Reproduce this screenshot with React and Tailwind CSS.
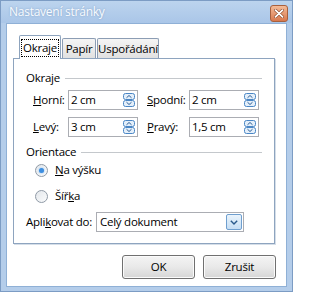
import React from "react";

const Spinner = () => (
  <svg width="12" height="14" viewBox="0 0 12 14" className="shrink-0">
    <rect x="0.5" y="0.5" width="11" height="6" rx="2" fill="#e4effa" stroke="#4a86c5" />
    <rect x="0.5" y="7.5" width="11" height="6" rx="2" fill="#e4effa" stroke="#4a86c5" />
    <path d="M3.5 4.8 L6 2.5 L8.5 4.8" fill="none" stroke="#2d5f97" />
    <path d="M3.5 9.2 L6 11.5 L8.5 9.2" fill="none" stroke="#2d5f97" />
  </svg>
);

const GroupTitle = ({ children }) => (
  <div className="flex items-center h-[16px] pr-[12px]">
    <span className="pr-[5px]">{children}</span>
    <div className="flex-1 h-px bg-[#c4c8cc]" />
  </div>
);

const SpinField = ({ mnemonic, rest, value, labelWidth }) => (
  <div className="flex items-center">
    <span className={labelWidth}>
      <u>{mnemonic}</u>
      {rest}
    </span>
    <div className="w-[70px] h-[20px] border border-[#abadb3] bg-white flex items-center pl-[2px] pr-[2px]">
      <span className="flex-1">{value}</span>
      <Spinner />
    </div>
  </div>
);

const Radio = ({ checked, children }) => (
  <div className="flex items-center h-[18px] pl-[21px]">
    <div className="w-[13px] h-[13px] rounded-full border border-[#8f9aa6] bg-gradient-to-br from-[#e3e7eb] to-[#fafbfc] flex items-center justify-center">
      {checked && <div className="w-[5px] h-[5px] rounded-full bg-[#3d8ee0] shadow-[0_0_2px_#7ab6f0]" />}
    </div>
    <span className="pl-[7px]">{children}</span>
  </div>
);

const Button = ({ children }) => (
  <button className="w-[73px] h-[24px] rounded-[3px] border border-[#707070] bg-gradient-to-b from-[#f4f4f4] via-[#e9e9e9] to-[#d6d6d6] shadow-[inset_0_0_0_1px_#fbfbfb] text-black">
    {children}
  </button>
);

export default function App() {
  return (
    <div className="w-[293px] h-[292px] bg-[#b4cdea] border border-[#7c9cc4] flex flex-col font-['Open_Sans','Noto_Sans',sans-serif] text-[11.5px] tracking-[-0.25px] leading-none text-black whitespace-nowrap">
      {/* title bar */}
      <div className="h-[22px] flex items-center justify-between pl-[8px] pr-[4px] bg-gradient-to-b from-[#bcd4ee] to-[#aac6e8]">
        <span className="text-[#f8fbff] text-[12px] [text-shadow:0_0_2px_#7d9cc2]">Nastavení stránky</span>
        <div className="w-[18px] h-[17px] mt-[3px] rounded-[3px] border border-[#a8603d] bg-gradient-to-b from-[#f3bb98] to-[#d8784d] flex items-center justify-center">
          <svg width="10" height="9" viewBox="0 0 10 9">
            <path d="M1.5 1.2 L8.5 7.8 M8.5 1.2 L1.5 7.8" stroke="#8c4a2c" strokeWidth="3" strokeLinecap="round" />
            <path d="M1.5 1.2 L8.5 7.8 M8.5 1.2 L1.5 7.8" stroke="#ffffff" strokeWidth="1.8" strokeLinecap="round" />
          </svg>
        </div>
      </div>

      {/* client area */}
      <div className="mx-[5px] h-[264px] bg-white border border-[#8fb0d6] pt-[11px] pl-[6px] flex flex-col">
        {/* tabs */}
        <div className="flex items-end pl-[6px] -mb-px relative z-10 h-[24px]">
          <div className="w-[42px] h-[24px] bg-white border border-b-0 border-[#8da3bd] rounded-t-[2px] flex items-center justify-center">
            <span className="border border-dotted border-black px-[1px] h-[18px] flex items-center">Okraje</span>
          </div>
          <div className="ml-px mb-px w-[34px] h-[20px] border border-b-0 border-[#8c9db4] rounded-t-[2px] bg-gradient-to-b from-[#f5f5f5] to-[#e1e1e1] flex items-center justify-center">
            Papír
          </div>
          <div className="ml-px mb-px w-[62px] h-[20px] border border-b-0 border-[#8c9db4] rounded-t-[2px] bg-gradient-to-b from-[#f5f5f5] to-[#e1e1e1] flex items-center justify-center">
            Uspořádání
          </div>
        </div>

        {/* panel */}
        <div className="w-[262px] h-[186px] border border-[#8ea4bf] bg-white shadow-[1px_1px_0_#d5dee8] pl-[12px] pt-[11px] flex flex-col">
          <GroupTitle>Okraje</GroupTitle>
          <div className="flex mt-[4px] pl-[7px]">
            <SpinField mnemonic="H" rest="orní:" value="2 cm" labelWidth="w-[35px]" />
            <div className="ml-[9px]">
              <SpinField mnemonic="S" rest="podní:" value="2 cm" labelWidth="w-[42px]" />
            </div>
          </div>
          <div className="flex mt-[7px] pl-[7px]">
            <SpinField mnemonic="L" rest="evý:" value="3 cm" labelWidth="w-[35px]" />
            <div className="ml-[9px]">
              <SpinField mnemonic="P" rest="ravý:" value="1,5 cm" labelWidth="w-[42px]" />
            </div>
          </div>
          <div className="mt-[7px]">
            <GroupTitle>Orientace</GroupTitle>
          </div>
          <div className="mt-px -ml-[12px]">
            <Radio checked>
              <u>N</u>a výšku
            </Radio>
          </div>
          <div className="mt-[8px] -ml-[12px]">
            <Radio>
              Šíř<u>k</u>a
            </Radio>
          </div>
          <div className="flex items-center mt-[7px]">
            <span className="w-[70px]">
              Apli<u>k</u>ovat do:
            </span>
            <div className="w-[148px] h-[20px] border border-[#abadb3] flex items-center pl-[3px] pr-px">
              <span className="flex-1">Celý dokument</span>
              <div className="w-[16px] h-[16px] rounded-[2px] border border-[#6f9fcf] bg-gradient-to-b from-[#eaf4fc] to-[#c6def4] flex items-center justify-center">
                <svg width="8" height="5" viewBox="0 0 8 5">
                  <path d="M0.8 0.8 L4 4 L7.2 0.8" fill="none" stroke="#2a5a8c" strokeWidth="1.4" />
                </svg>
              </div>
            </div>
          </div>
        </div>

        {/* buttons */}
        <div className="flex justify-end gap-[8px] pr-[10px] mt-[11px]">
          <Button>OK</Button>
          <Button>Zrušit</Button>
        </div>
      </div>
    </div>
  );
}
